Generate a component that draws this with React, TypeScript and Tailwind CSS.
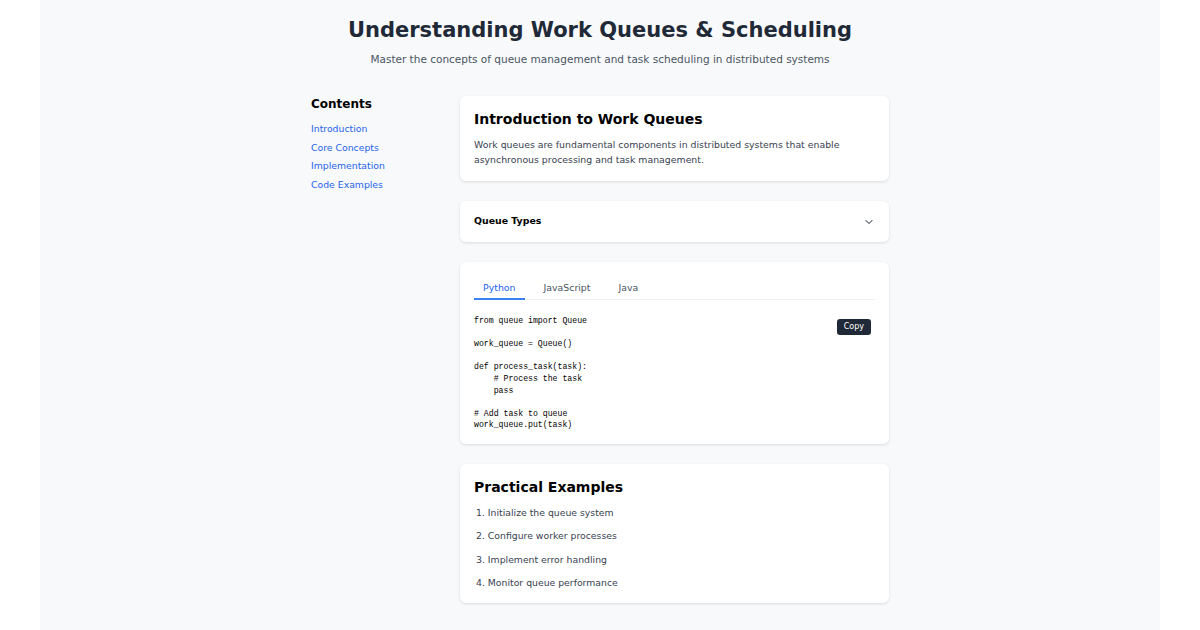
import React, { useState } from 'react';

const code = `from queue import Queue

work_queue = Queue()

def process_task(task):
    # Process the task
    pass

# Add task to queue
work_queue.put(task)`;

const steps = [
  'Initialize the queue system',
  'Configure worker processes',
  'Implement error handling',
  'Monitor queue performance',
];

export default function App() {
  const [tab, setTab] = useState('Python');

  return (
    <div className="min-h-[630px] bg-white font-['DejaVu_Sans',sans-serif]">
      <div className="mx-auto min-h-[630px] w-[1120px] bg-[#f8f9fb] pt-[17px]">
        {/* Header */}
        <div className="text-center">
          <h1 className="text-[21px] font-bold leading-[26px] text-[#1f2937]">
            Understanding Work Queues &amp; Scheduling
          </h1>
          <p className="mt-[9px] text-[10.5px] leading-[14px] text-[#4b5563]">
            Master the concepts of queue management and task scheduling in distributed systems
          </p>
        </div>

        <div className="mt-[30px] flex justify-center gap-6">
          {/* Sidebar */}
          <aside className="w-[125px] pt-[1px]">
            <h2 className="text-[12px] font-bold leading-[15px] text-black">Contents</h2>
            <nav className="mt-[10px] flex flex-col gap-[4.6px] text-[9.3px] leading-[14px] text-[#2563eb]">
              <a href="#intro">Introduction</a>
              <a href="#core">Core Concepts</a>
              <a href="#impl">Implementation</a>
              <a href="#code">Code Examples</a>
            </nav>
          </aside>

          {/* Main column */}
          <main className="flex w-[429px] flex-col gap-5">
            <section className="rounded-md bg-white px-[14px] pb-[14px] pt-[14px] shadow-[0_1px_3px_rgba(0,0,0,0.12)]">
              <h2 className="text-[14px] font-bold leading-[19px] text-black">Introduction to Work Queues</h2>
              <p className="mt-[8px] text-[9.35px] leading-[15px] text-[#374151]">
                Work queues are fundamental components in distributed systems that enable asynchronous processing and task management.
              </p>
            </section>

            <section className="flex h-[41px] items-center justify-between rounded-md bg-white px-[14px] shadow-[0_1px_3px_rgba(0,0,0,0.12)]">
              <span className="text-[9.4px] font-bold text-black">Queue Types</span>
              <svg width="12" height="12" viewBox="0 0 24 24" fill="none" stroke="#111827" strokeWidth="2" strokeLinecap="round" strokeLinejoin="round">
                <path d="m6 9 6 6 6-6" />
              </svg>
            </section>

            <section className="rounded-md bg-white px-[14px] pb-[13px] pt-[19px] shadow-[0_1px_3px_rgba(0,0,0,0.12)]">
              <div className="flex gap-[10px] border-b border-[#f0f1f3] text-[9.4px] leading-[14px]">
                {['Python', 'JavaScript', 'Java'].map((t) => (
                  <button
                    key={t}
                    onClick={() => setTab(t)}
                    className={`-mb-px border-b-2 px-[9px] pb-[3px] ${tab === t ? 'border-[#3b82f6] text-[#2563eb]' : 'border-transparent text-[#4b5563]'}`}
                  >
                    {t}
                  </button>
                ))}
              </div>
              <div className="relative mt-[15px]">
                <pre className="font-['Liberation_Mono',monospace] text-[8.2px] leading-[11.6px] text-black">{code}</pre>
                <button className="absolute right-[4px] top-[4px] rounded-[3px] bg-[#1f2937] px-[7px] py-[2px] text-[8px] leading-[12px] text-white">
                  Copy
                </button>
              </div>
            </section>

            <section className="rounded-md bg-white px-[14px] pb-[12px] pt-[14px] shadow-[0_1px_3px_rgba(0,0,0,0.12)]">
              <h2 className="text-[14px] font-bold leading-[19px] text-black">Practical Examples</h2>
              <ol className="mt-[9px] flex flex-col gap-[9px] pl-[2px] text-[9.3px] leading-[14.5px] text-[#374151]">
                {steps.map((s, i) => (
                  <li key={s}>
                    {i + 1}. {s}
                  </li>
                ))}
              </ol>
            </section>
          </main>
        </div>
      </div>
    </div>
  );
}
